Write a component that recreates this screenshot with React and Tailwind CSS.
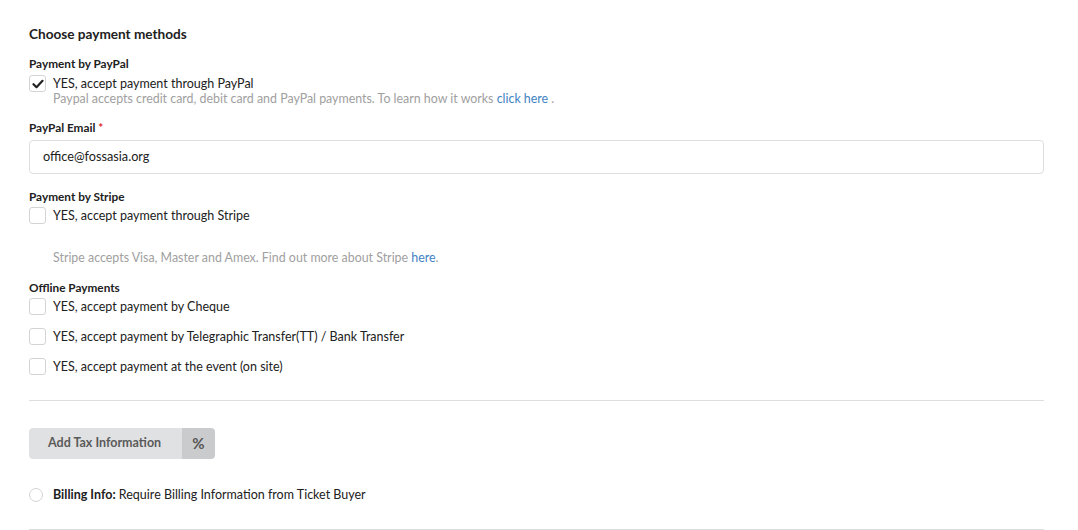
import React from "react";

const Check = ({ checked }) => (
    <span className="relative inline-flex w-[17px] h-[17px] shrink-0 rounded-[3px] border border-[#d4d4d5] bg-white items-center justify-center">
        {checked && (
            <svg width="12" height="10" viewBox="0 0 12 10">
                <path d="M1.5 5.2 L4.5 8.2 L10.5 1.8" fill="none" stroke="#222" strokeWidth="2.2" strokeLinecap="round" strokeLinejoin="round" />
            </svg>
        )}
    </span>
);

const CheckRow = ({ checked, children }) => (
    <div className="flex items-center gap-[7px] h-[17px]">
        <Check checked={checked} />
        <span className="text-[12.5px] text-[#212121] leading-[17px] whitespace-nowrap">{children}</span>
    </div>
);

const Label = ({ children }) => (
    <div className="text-[11.8px] font-bold text-[#212121] leading-[16px]">{children}</div>
);

export default function App() {
    return (
        <div className="bg-white min-h-screen px-[29px] pt-[26px] font-['Lato','Liberation_Sans',sans-serif] text-[#212121] w-[1073px]">
            <h3 className="text-[13.6px] font-bold leading-[17px]">Choose payment methods</h3>

            <div className="mt-[13px]">
                <Label>Payment by PayPal</Label>
                <div className="mt-[3px]">
                    <CheckRow checked>YES, accept payment through PayPal</CheckRow>
                </div>
                <div className="pl-[24px] -mt-[1px] text-[12.4px] text-[#a0a0a0] leading-[15px]">
                    Paypal accepts credit card, debit card and PayPal payments. To learn how it works{" "}
                    <a className="text-[#4183c4]">click here</a> .
                </div>
            </div>

            <div className="mt-[14px]">
                <Label>
                    PayPal Email <span className="text-[#db2828]">*</span>
                </Label>
                <div className="mt-[4px] h-[34px] rounded-[4px] border border-[#dedede] flex items-center px-[13px] text-[12.7px] text-[#212121]">
                    office@fossasia.org
                </div>
            </div>

            <div className="mt-[15px]">
                <Label>Payment by Stripe</Label>
                <div className="mt-[2px]">
                    <CheckRow>YES, accept payment through Stripe</CheckRow>
                </div>
                <div className="pl-[24px] mt-[26px] text-[12.4px] text-[#a0a0a0] leading-[15px]">
                    Stripe accepts Visa, Master and Amex. Find out more about Stripe{" "}
                    <a className="text-[#4183c4]">here</a>.
                </div>
            </div>

            <div className="mt-[15px]">
                <Label>Offline Payments</Label>
                <div className="mt-[2px] flex flex-col gap-[13px]">
                    <CheckRow>YES, accept payment by Cheque</CheckRow>
                    <CheckRow>YES, accept payment by Telegraphic Transfer(TT) / Bank Transfer</CheckRow>
                    <CheckRow>YES, accept payment at the event (on site)</CheckRow>
                </div>
            </div>

            <div className="mt-[25px] border-t border-[#dededf]" />

            <div className="mt-[27px] flex">
                <button className="flex h-[31px] rounded-[4px] overflow-hidden text-[12.5px] font-bold text-[#5a5a5a] whitespace-nowrap">
                    <span className="bg-[#e0e1e2] flex items-center px-[19px] w-[153px]">Add Tax Information</span>
                    <span className="bg-[#cacbcd] flex items-center justify-center w-[33px] font-bold text-[15px] text-[#555]">%</span>
                </button>
            </div>

            <div className="mt-[26px] flex items-center gap-[10px] h-[20px]">
                <span className="w-[14px] h-[14px] rounded-full border border-[#d4d4d5] bg-white" />
                <span className="text-[12.5px] text-[#212121]">
                    <b>Billing Info:</b> Require Billing Information from Ticket Buyer
                </span>
            </div>

            <div className="mt-[24px] border-t border-[#dededf]" />
        </div>
    );
}
